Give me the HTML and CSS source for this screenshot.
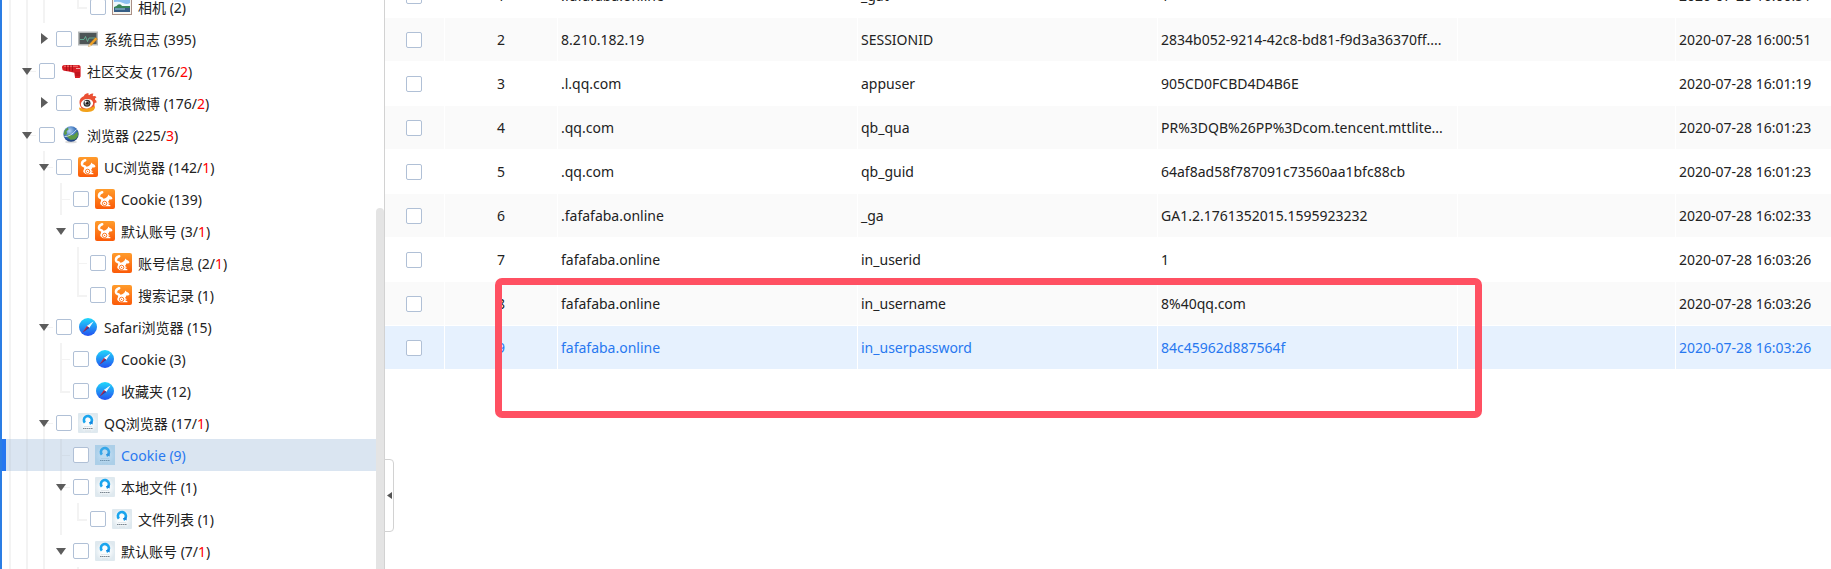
FILE: index.html
```
<!DOCTYPE html>
<html lang="zh-CN">
<head>
<meta charset="utf-8">
<title>Cookie</title>
<link rel="stylesheet" href="styles.css">
</head>
<body>
<svg class="defs" aria-hidden="true">
<defs>
<linearGradient id="orange" x1="0" y1="0" x2="0" y2="1"><stop offset="0" stop-color="#ff9c2c"/><stop offset="1" stop-color="#fb5a08"/></linearGradient>
<linearGradient id="sky" x1="0" y1="0" x2="0" y2="1"><stop offset="0" stop-color="#1fd8fb"/><stop offset="1" stop-color="#2450f0"/></linearGradient>
<radialGradient id="earth" cx="0.4" cy="0.3" r="0.7"><stop offset="0" stop-color="#b9d6f5"/><stop offset="0.5" stop-color="#4a80c4"/><stop offset="1" stop-color="#173a7c"/></radialGradient>
<radialGradient id="pale"><stop offset="0.4" stop-color="#fbfdfe"/><stop offset="1" stop-color="#dfe9ef"/></radialGradient>
</defs>
<symbol id="uc" viewBox="0 0 20 20"><rect width="20" height="20" rx="2" fill="url(#orange)"/><path d="M7.200 3.200C4.900 4 3.700 6 4.100 7.700c.4 1.500 2.300 1.300 3.200 2.400.9 1.200-.6 2.400-.8 4.300" fill="none" stroke="#fff" stroke-width="2.500" stroke-linecap="round"/><path d="M6 12.500C7 9.700 10 9.800 11.700 8.300l1.200-1.200.2-1.700 1.400 1.400c1.500.3 2.600 1.500 3 2.700-.5.900-1.700 1.100-3.200 1.100-.2 1.300-.7 2-1.400 2.500l1.700.9-.5 1-1.600-.5c.6.900 1.700 1.400 2.900 1.800v1H8.500C6.500 17 5.500 15 6 12.500z" fill="#fff"/><circle cx="9.600" cy="14.400" r="2.200" fill="none" stroke="#fb6a10" stroke-width=".9"/><circle cx="9.600" cy="14.400" r=".6" fill="#fb6a10"/></symbol>
<symbol id="safari" viewBox="0 0 20 20"><circle cx="10" cy="10" r="9" fill="url(#sky)"/><path d="M15.500 4.500 11.200 11 9 9z" fill="#fff"/><path d="M15.500 4.500 9 9l1 1z" fill="#dff4ff"/><path d="M4.500 15.500 9 9l2.200 2z" fill="#e81c24"/><path d="m4.500 15.500 6.700-4.500-1.100-1z" fill="#1c43ae"/></symbol>
<symbol id="qq" viewBox="0 0 20 20"><rect width="20" height="20" rx="1" fill="url(#pale)"/><path d="M6.900 9.700A4 4 0 1 1 11.500 10.700" fill="none" stroke="#1aa5ee" stroke-width="2.600"/><path d="M10.800 9.400l3.600-1.400.4 3.600z" fill="#1583dc"/><path d="M6 13.500h8" stroke="#c8d3da" stroke-width=".5"/><path d="M5 15.500h10" stroke="#7c8791" stroke-width="1" stroke-dasharray="1.500 .4"/><path d="M7 18h6" stroke="#d0d9de" stroke-width=".6"/></symbol>
<symbol id="photo" viewBox="0 0 20 20"><path d="M0 0h20v18H0z" fill="#a88f86"/><path d="M1 1h18v16H1z" fill="#f7f5ef"/><path d="M2 2h16v13H2z" fill="#8cc0f0"/><path d="M2 5q5-1 9 1t7 0v4H2z" fill="#eef8fc"/><path d="M2 10q3-1 4-2.500 3-1 4 1.500h8v2H2z" fill="#388459"/><path d="M2 11h16v4H2z" fill="#365e86"/><path d="M3 12h10" stroke="#9fd1d9"/></symbol>
<symbol id="log" viewBox="0 0 20 20"><path d="M0 2.500h20v14H0z" fill="#b5b8b8"/><path d="M1.500 4h17v11h-17z" fill="#4d5556"/><path d="M2 10.500h4l1.500-3 2 5 1.500-3.500h6" fill="none" stroke="#69c0a0" stroke-width=".8"/><path d="m10.500 17.500 1-2.600 6-6.500 2 1.700-6.300 6.500z" fill="#f2a324" stroke="#b87620" stroke-width=".4"/><path d="m10.500 17.500 1-2.600 1.700 1.700z" fill="#f8e2b4"/></symbol>
<symbol id="drill" viewBox="0 0 20 20"><path d="M1 6.500Q.8 4 3.500 4h13.800q2.500 0 2.300 2.500v9l-1 1.400h-4.500l-.8-5.200L8 10.400 3 9.700Q1 9 1 6.500z" fill="#d81d25"/><path d="M3 5.200h14" stroke="#f57b78"/><path d="M5.500 4v6M8.500 4v6.200M11.500 4v6.400M14 12h5M14 14h5" stroke="#a00d17" stroke-width=".8"/><path d="M15 7.500h4" stroke="#f3a7a5"/></symbol>
<symbol id="weibo" viewBox="0 0 20 20"><path d="M1.500 10Q1 5 6 3q0-2 4.500-3-.5 1.500.5 2.300 2-2.300 4.500-1.500-1.300 1.500-.5 2.400 2.500-.4 3.500 1-2 .8-1.500 2.300 1.700 1 1.700 3-1.700 0-2.200 1 1 6-6.500 7T1.500 10z" fill="#ea5034"/><path d="M1 14.500q8 3 16-1.500 1 5.500-7.500 6T1 14.500z" fill="#f2a21b"/><ellipse cx="9" cy="10.700" rx="6.200" ry="4.700" fill="#fff" transform="rotate(-12 9 10.700)"/><circle cx="9" cy="10.200" r="3.500" fill="#303030"/><circle cx="9" cy="10.200" r="2.300" fill="#909090"/><circle cx="9.300" cy="10.200" r="1.300" fill="#111"/><circle cx="7.500" cy="8.700" r="1" fill="#fff"/></symbol>
<symbol id="globe" viewBox="0 0 20 20"><ellipse cx="10" cy="17" rx="6" ry="1.300" fill="#dcdcdc"/><circle cx="10" cy="9" r="7.700" fill="url(#earth)"/><path d="M3.500 6Q4 4 7 2.500l.5 2-2 1.700.5 2.500-2.300 1.500Q2.300 8 3.500 6zM5 11q3-2.500 5-1l2 .5 4.500-4 .5 4.500-2.800 3.500-4.700.3z" fill="#5c9a45"/><path d="M3.500 11.500q6 .5 12-7" stroke="#d2e5f8" stroke-width=".9" fill="none"/></symbol>
</svg>
<div class="app">
<aside class="side">
<ul class="tree">
<li class="node"><i class="g v"></i><i class="g v"></i><i class="g v"></i><i class="g"></i><i class="g end"></i><label><input type="checkbox"><svg class="ico"><use href="#photo"/></svg><span>相机 (2)</span></label></li>
<li class="node"><i class="g v"></i><i class="g v"></i><button class="g shut" aria-label="展开"></button><label><input type="checkbox"><svg class="ico"><use href="#log"/></svg><span>系统日志 (395)</span></label></li>
<li class="node"><i class="g v"></i><button class="g v stub open" aria-label="收起"></button><label><input type="checkbox"><svg class="ico"><use href="#drill"/></svg><span>社区交友 (176/<b>2</b>)</span></label></li>
<li class="node"><i class="g v"></i><i class="g v"></i><button class="g shut" aria-label="展开"></button><label><input type="checkbox"><svg class="ico"><use href="#weibo"/></svg><span>新浪微博 (176/<b>2</b>)</span></label></li>
<li class="node"><i class="g v"></i><button class="g v stub open" aria-label="收起"></button><label><input type="checkbox"><svg class="ico"><use href="#globe"/></svg><span>浏览器 (225/<b>3</b>)</span></label></li>
<li class="node"><i class="g v"></i><i class="g v"></i><button class="g v stub open" aria-label="收起"></button><label><input type="checkbox"><svg class="ico"><use href="#uc"/></svg><span>UC浏览器 (142/<b>1</b>)</span></label></li>
<li class="node"><i class="g v"></i><i class="g v"></i><i class="g v"></i><i class="g v stub"></i><label><input type="checkbox"><svg class="ico"><use href="#uc"/></svg><span>Cookie (139)</span></label></li>
<li class="node"><i class="g v"></i><i class="g v"></i><i class="g v"></i><button class="g open" aria-label="收起"></button><label><input type="checkbox"><svg class="ico"><use href="#uc"/></svg><span>默认账号 (3/<b>1</b>)</span></label></li>
<li class="node"><i class="g v"></i><i class="g v"></i><i class="g v"></i><i class="g"></i><i class="g v stub"></i><label><input type="checkbox"><svg class="ico"><use href="#uc"/></svg><span>账号信息 (2/<b>1</b>)</span></label></li>
<li class="node"><i class="g v"></i><i class="g v"></i><i class="g v"></i><i class="g"></i><i class="g end"></i><label><input type="checkbox"><svg class="ico"><use href="#uc"/></svg><span>搜索记录 (1)</span></label></li>
<li class="node"><i class="g v"></i><i class="g v"></i><button class="g v stub open" aria-label="收起"></button><label><input type="checkbox"><svg class="ico"><use href="#safari"/></svg><span>Safari浏览器 (15)</span></label></li>
<li class="node"><i class="g v"></i><i class="g v"></i><i class="g v"></i><i class="g v stub"></i><label><input type="checkbox"><svg class="ico"><use href="#safari"/></svg><span>Cookie (3)</span></label></li>
<li class="node"><i class="g v"></i><i class="g v"></i><i class="g v"></i><i class="g end"></i><label><input type="checkbox"><svg class="ico"><use href="#safari"/></svg><span>收藏夹 (12)</span></label></li>
<li class="node"><i class="g v"></i><i class="g v"></i><button class="g v stub open" aria-label="收起"></button><label><input type="checkbox"><svg class="ico"><use href="#qq"/></svg><span>QQ浏览器 (17/<b>1</b>)</span></label></li>
<li class="node current"><i class="g v"></i><i class="g v"></i><i class="g v"></i><i class="g v stub"></i><label><input type="checkbox"><svg class="ico"><use href="#qq"/><rect class="tint" width="20" height="20"/></svg><span>Cookie (9)</span></label></li>
<li class="node"><i class="g v"></i><i class="g v"></i><i class="g v"></i><button class="g v stub open" aria-label="收起"></button><label><input type="checkbox"><svg class="ico"><use href="#qq"/></svg><span>本地文件 (1)</span></label></li>
<li class="node"><i class="g v"></i><i class="g v"></i><i class="g v"></i><i class="g v"></i><i class="g end"></i><label><input type="checkbox"><svg class="ico"><use href="#qq"/></svg><span>文件列表 (1)</span></label></li>
<li class="node"><i class="g v"></i><i class="g v"></i><i class="g v"></i><button class="g open" aria-label="收起"></button><label><input type="checkbox"><svg class="ico"><use href="#qq"/></svg><span>默认账号 (7/<b>1</b>)</span></label></li>
<li class="node"><i class="g v"></i><i class="g v"></i><i class="g v"></i><i class="g"></i><i class="g v"></i></li>
</ul>
<div class="scroll"><div class="thumb"></div></div>
</aside>
<main class="main">
<table class="grid">
<colgroup><col class="c-check"><col class="c-no"><col class="c-text"><col class="c-text"><col class="c-text"><col class="c-blank"><col></colgroup>
<tbody>
<tr><td><input type="checkbox" aria-label="1"></td><td>1</td><td>.fafafaba.online</td><td>_gat</td><td>1</td><td></td><td>2020-07-28 16:00:51</td></tr>
<tr><td><input type="checkbox" aria-label="2"></td><td>2</td><td>8.210.182.19</td><td>SESSIONID</td><td>2834b052-9214-42c8-bd81-f9d3a36370ff....</td><td></td><td>2020-07-28 16:00:51</td></tr>
<tr><td><input type="checkbox" aria-label="3"></td><td>3</td><td>.l.qq.com</td><td>appuser</td><td>905CD0FCBD4D4B6E</td><td></td><td>2020-07-28 16:01:19</td></tr>
<tr><td><input type="checkbox" aria-label="4"></td><td>4</td><td>.qq.com</td><td>qb_qua</td><td>PR%3DQB%26PP%3Dcom.tencent.mttlite...</td><td></td><td>2020-07-28 16:01:23</td></tr>
<tr><td><input type="checkbox" aria-label="5"></td><td>5</td><td>.qq.com</td><td>qb_guid</td><td>64af8ad58f787091c73560aa1bfc88cb</td><td></td><td>2020-07-28 16:01:23</td></tr>
<tr><td><input type="checkbox" aria-label="6"></td><td>6</td><td>.fafafaba.online</td><td>_ga</td><td>GA1.2.1761352015.1595923232</td><td></td><td>2020-07-28 16:02:33</td></tr>
<tr><td><input type="checkbox" aria-label="7"></td><td>7</td><td>fafafaba.online</td><td>in_userid</td><td>1</td><td></td><td>2020-07-28 16:03:26</td></tr>
<tr><td><input type="checkbox" aria-label="8"></td><td>8</td><td>fafafaba.online</td><td>in_username</td><td>8%40qq.com</td><td></td><td>2020-07-28 16:03:26</td></tr>
<tr class="current"><td><input type="checkbox" aria-label="9"></td><td>9</td><td>fafafaba.online</td><td>in_userpassword</td><td>84c45962d887564f</td><td></td><td>2020-07-28 16:03:26</td></tr>
</tbody>
</table>
<div class="mark"></div>
<button class="fold" aria-label="收起侧栏"></button>
</main>
</div>
</body>
</html>
```
FILE: styles.css
```
* { box-sizing: border-box; }
body {
  margin: 0;
  background: #fff;
  color: #222;
  font: 14px/20px "Noto Sans", "Noto Sans CJK SC", sans-serif;
}
.defs { position: absolute; width: 0; height: 0; }
.app {
  display: flex;
  height: 100vh;
  overflow: hidden;
  border-left: 2px solid #2b7de4;
}
input[type="checkbox"] {
  appearance: none;
  flex: none;
  width: 16px;
  height: 16px;
  margin: 0;
  border: 1px solid #b0c0d6;
  border-radius: 2px;
  background: #fff;
}

/* Sidebar tree */
.side {
  display: flex;
  flex: none;
  width: 383px;
  overflow: hidden;
  border-right: 1px solid #d2d2d2;
}
.tree {
  flex: 1;
  margin: -9px 0 0;
  padding: 0;
  list-style: none;
}
.node {
  display: flex;
  height: 32px;
  padding-left: 3px;
  white-space: nowrap;
}
.node label { display: flex; align-items: center; }
.node span { padding-top: 2px; }
.node b { color: #f00; font-weight: 400; }
.node .ico { flex: none; width: 20px; height: 20px; margin: 0 6px; }
.node.current {
  background: linear-gradient(to right, #2677f0 4px, #dae5f1 4px);
  color: #2878f0;
}
.tint { fill: #5fa8de; opacity: 0.4; }
.g {
  position: relative;
  flex: none;
  width: 17px;
  height: 32px;
  padding: 0;
  border: 0;
  background: none no-repeat;
}
.g.v {
  background-image: linear-gradient(#f3f3f3, #f3f3f3);
  background-position: 4px 0;
  background-size: 2px 32px;
}
.g.stub {
  background-image: linear-gradient(#f3f3f3, #f3f3f3), linear-gradient(#f3f3f3, #f3f3f3);
  background-position: 4px 0, 4px 16px;
  background-size: 2px 32px, 10px 1px;
}
.g.end {
  background-image: linear-gradient(#f3f3f3, #f3f3f3), linear-gradient(#f3f3f3, #f3f3f3);
  background-position: 4px 0, 4px 16px;
  background-size: 2px 16px, 10px 2px;
}
.current .g.v { background-image: linear-gradient(#d3dde8, #d3dde8); }
.current .g.stub { background-image: linear-gradient(#d3dde8, #d3dde8), linear-gradient(#d3dde8, #d3dde8); }
.open::before,
.shut::before {
  content: "";
  position: absolute;
  background: #5c5c5c;
}
.open::before {
  left: 0;
  top: 13px;
  width: 10px;
  height: 7px;
  clip-path: polygon(0 0, 100% 0, 50% 100%);
}
.shut::before {
  left: 2px;
  top: 10px;
  width: 7px;
  height: 11px;
  clip-path: polygon(0 0, 100% 50%, 0 100%);
}
.scroll { display: flex; flex: none; width: 8px; padding-top: 208px; }
.thumb { flex: 1; border-radius: 4px 4px 0 0; background: #e4e4e4; }

/* Record list */
.main { position: relative; flex: 1; min-width: 0; }
.grid {
  width: 100%;
  margin-top: -26px;
  table-layout: fixed;
  border-collapse: separate;
  border-spacing: 0;
}
.c-check { width: 60px; }
.c-no { width: 113px; }
.c-text { width: 300px; }
.c-blank { width: 218px; }
.grid td {
  height: 44px;
  padding: 0 3px;
  border-right: 1px solid #fff;
  border-bottom: 1px solid #fff;
  white-space: nowrap;
}
.grid td:nth-child(-n+2) { text-align: center; }
.grid td:first-child { padding: 0 4px 0 3px; }
.grid td:last-child { border-right: 0; }
.grid td input { display: block; margin: 0 auto; }
.grid tr:nth-child(even) { background: #fafafa; }
.grid tr.current { background: #e6f1fe; color: #2878f0; }

/* Highlight frame over the last rows */
.mark {
  position: absolute;
  left: 110px;
  top: 278px;
  width: 987px;
  height: 140px;
  border: 7px solid #ff5062;
  border-radius: 7px;
}
.fold {
  position: absolute;
  left: -1px;
  top: 459px;
  width: 10px;
  height: 73px;
  padding: 0;
  border: 1px solid #d2d2d2;
  border-radius: 0 4px 4px 0;
  background: #fff;
}
.fold::before {
  content: "";
  position: absolute;
  left: 2px;
  top: 32px;
  width: 5px;
  height: 7px;
  background: #555;
  clip-path: polygon(0 50%, 100% 0, 100% 100%);
}
```
